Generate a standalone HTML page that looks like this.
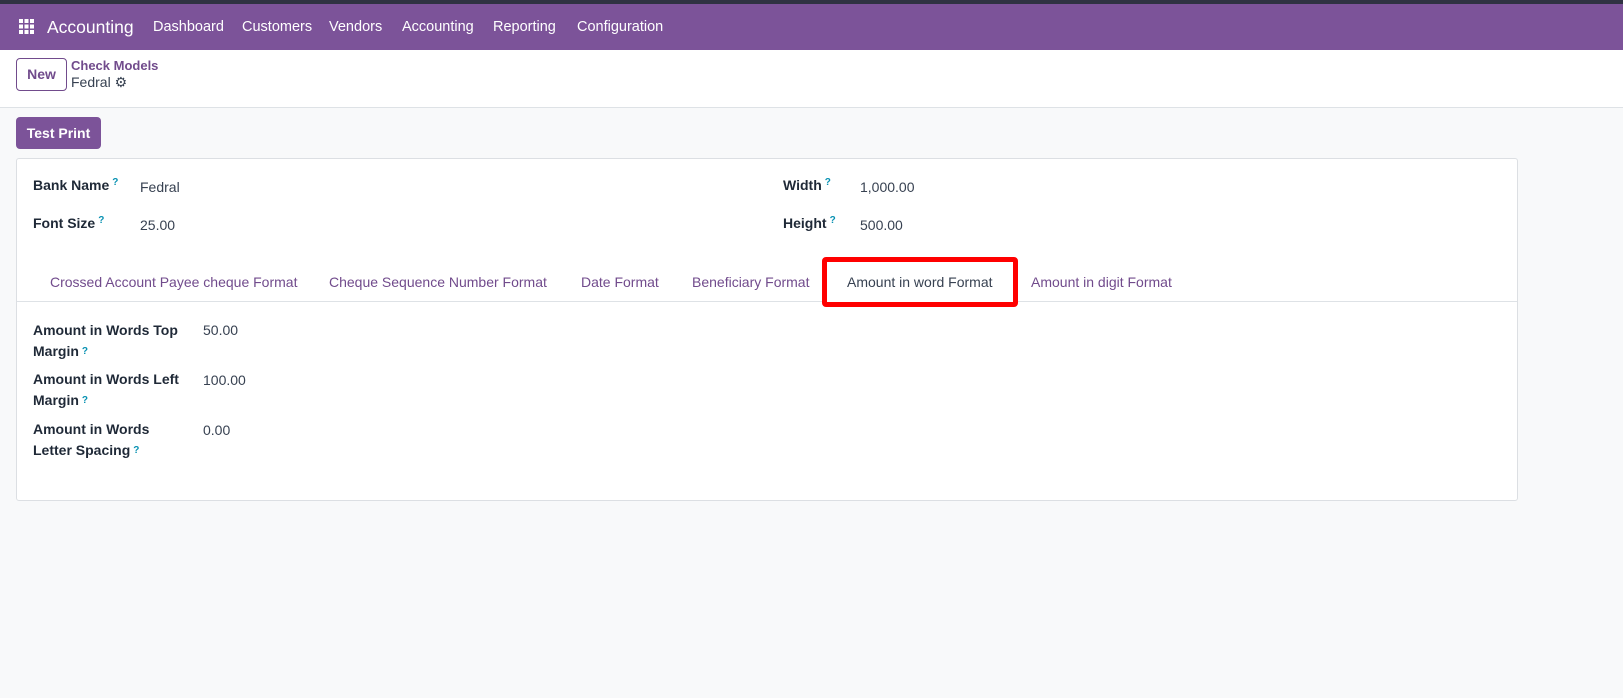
<!DOCTYPE html>
<html><head><meta charset="utf-8"><style>
*{box-sizing:border-box;margin:0;padding:0}
body{width:1623px;height:698px;background:#f8f9fa;font-family:"Liberation Sans",sans-serif;font-size:14px;color:#374151;position:relative;overflow:hidden}
.abs{position:absolute;white-space:nowrap}
.top{position:absolute;left:0;top:0;width:1623px;height:4px;background:#2f3242}
.nav{position:absolute;left:0;top:4px;width:1623px;height:46px;background:#7c5399}
.nav .abs{color:#fff;font-size:14.5px;top:15px}
.cp{position:absolute;left:0;top:50px;width:1623px;height:58px;background:#fff;border-bottom:1px solid #dee2e6}
.btn{position:absolute;border-radius:4px;font-weight:bold;font-size:14px;text-align:center}
.card{position:absolute;left:16px;top:158px;width:1502px;height:343px;background:#fff;border:1px solid #dcdfe3;border-radius:3px}
.lbl{font-weight:bold;color:#1f2937}
.q{color:#0891b2;font-size:10px;vertical-align:top;margin-left:3px;font-weight:bold}
.tab{color:#714b8c;top:274px}
</style></head><body>
<div class="top"></div>
<div class="nav">
<svg class="abs" style="left:19px;top:15px" width="15" height="15" viewBox="0 0 15 15" fill="#fff"><rect x="0" y="0" width="4" height="4"/><rect x="5.5" y="0" width="4" height="4"/><rect x="11" y="0" width="4" height="4"/><rect x="0" y="5.5" width="4" height="4"/><rect x="5.5" y="5.5" width="4" height="4"/><rect x="11" y="5.5" width="4" height="4"/><rect x="0" y="11" width="4" height="4"/><rect x="5.5" y="11" width="4" height="4"/><rect x="11" y="11" width="4" height="4"/></svg>
<div class="abs" style="left:47px;top:13px;font-size:17.5px">Accounting</div>
<div class="abs" style="left:153px">Dashboard</div>
<div class="abs" style="left:242px">Customers</div>
<div class="abs" style="left:329px">Vendors</div>
<div class="abs" style="left:402px">Accounting</div>
<div class="abs" style="left:493px">Reporting</div>
<div class="abs" style="left:577px">Configuration</div>
</div>
<div class="cp">
<div class="btn" style="left:16px;top:8px;width:51px;height:33px;border:1px solid #714b8c;color:#714b8c;line-height:31px;background:#fff">New</div>
<div class="abs" style="left:71px;top:8px;color:#714b8c;font-weight:bold;font-size:13px">Check Models</div>
<div class="abs" style="left:71px;top:24px;color:#374151;font-size:14px">Fedral <span style="font-size:14px;color:#374151">&#9881;</span></div>
</div>
<div class="btn" style="left:16px;top:117px;width:85px;height:32px;background:#7c5399;color:#fff;line-height:32px">Test Print</div>
<div class="card"></div>
<div class="abs lbl" style="left:33px;top:177px">Bank Name<span class="q">?</span></div>
<div class="abs" style="left:140px;top:179px">Fedral</div>
<div class="abs lbl" style="left:33px;top:215px">Font Size<span class="q">?</span></div>
<div class="abs" style="left:140px;top:217px">25.00</div>
<div class="abs lbl" style="left:783px;top:177px">Width<span class="q">?</span></div>
<div class="abs" style="left:860px;top:179px">1,000.00</div>
<div class="abs lbl" style="left:783px;top:215px">Height<span class="q">?</span></div>
<div class="abs" style="left:860px;top:217px">500.00</div>
<div class="abs" style="left:17px;top:301px;width:1500px;height:1px;background:#dee2e6"></div>
<div class="abs tab" style="left:50px">Crossed Account Payee cheque Format</div>
<div class="abs tab" style="left:329px">Cheque Sequence Number Format</div>
<div class="abs tab" style="left:581px">Date Format</div>
<div class="abs tab" style="left:692px">Beneficiary Format</div>
<div class="abs" style="left:826px;top:261px;width:187px;height:42px;background:#fff"></div>
<div class="abs tab" style="left:847px;color:#374151">Amount in word Format</div>
<div class="abs tab" style="left:1031px">Amount in digit Format</div>
<div class="abs" style="left:822px;top:257px;width:196px;height:50px;border:5px solid #ff0000;border-radius:4px"></div>
<div class="abs lbl" style="left:33px;top:320px;line-height:21px">Amount in Words Top<br>Margin<span class="q">?</span></div>
<div class="abs" style="left:203px;top:322px">50.00</div>
<div class="abs lbl" style="left:33px;top:369px;line-height:21px">Amount in Words Left<br>Margin<span class="q">?</span></div>
<div class="abs" style="left:203px;top:372px">100.00</div>
<div class="abs lbl" style="left:33px;top:419px;line-height:21px">Amount in Words<br>Letter Spacing<span class="q">?</span></div>
<div class="abs" style="left:203px;top:422px">0.00</div>
</body></html>
